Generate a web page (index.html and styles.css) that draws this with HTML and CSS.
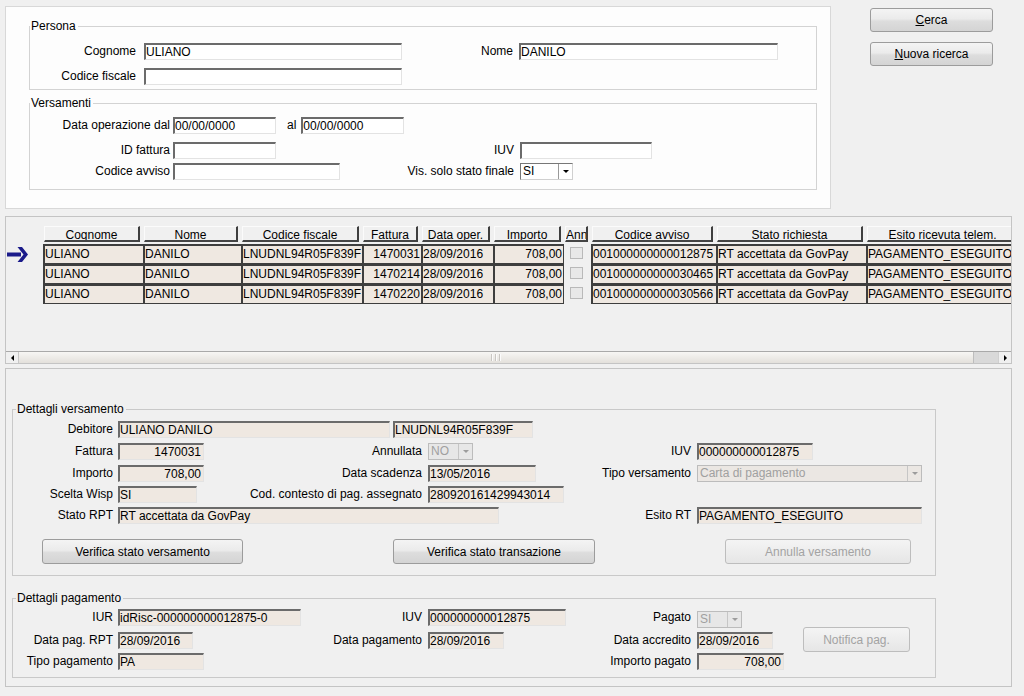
FILE: index.html
```html
<!DOCTYPE html>
<html lang="it">
<head>
<meta charset="utf-8">
<title>Ricerca versamenti</title>
<link rel="stylesheet" href="styles.css">
</head>
<body>
<main class="app">
  <div class="top">
    <section class="search">
      <fieldset class="grp persona">
        <legend>Persona</legend>
        <div class="form form-persona">
          <span class="lbl key">Cognome</span>
          <div class="cell"><div class="fld w258">ULIANO</div><span class="lbl">Nome</span></div>
          <div class="fld w259">DANILO</div>
          <span class="lbl key">Codice fiscale</span>
          <div class="cell"><div class="fld w258"></div></div>
        </div>
      </fieldset>
      <fieldset class="grp versamenti">
        <legend>Versamenti</legend>
        <div class="form form-vers">
          <span class="lbl key">Data operazione dal</span>
          <div class="cell"><div class="fld w103">00/00/0000</div><span class="lbl al">al</span><div class="fld w103">00/00/0000</div></div>
          <span class="lbl key">ID fattura</span>
          <div class="cell"><div class="fld w103"></div><span class="lbl">IUV</span></div>
          <div class="fld w132"></div>
          <span class="lbl key">Codice avviso</span>
          <div class="cell"><div class="fld w167"></div><span class="lbl">Vis. solo stato finale</span></div>
          <div class="sel w53"><span class="sel-v">SI</span><span class="sel-b"><i class="tri"></i></span></div>
        </div>
      </fieldset>
    </section>
    <div class="actions">
      <div class="btn"><span><u>C</u>erca</span></div>
      <div class="btn"><span><u>N</u>uova ricerca</span></div>
    </div>
  </div>

  <section class="list">
    <div class="list-body">
      <div class="lrow lhead">
        <span class="mark"></span>
        <span class="c c1">Cognome</span>
        <span class="c c2">Nome</span>
        <span class="c c3">Codice fiscale</span>
        <span class="c c4">Fattura</span>
        <span class="c c5">Data oper.</span>
        <span class="c c6">Importo</span>
        <span class="c c7">Ann</span>
        <span class="c c8">Codice avviso</span>
        <span class="c c9">Stato richiesta</span>
        <span class="c c10">Esito ricevuta telem.</span>
      </div>
      <div class="lrow ldata">
        <span class="mark"><svg width="21" height="16" viewBox="0 0 21 16"><path fill="#1b1b8a" d="M0 5.5h14v4H0z M10.5 0h4.5l6 7.5-6 7.5h-4.5l6-7.5z"/></svg></span>
        <span class="c c1">ULIANO</span>
        <span class="c c2">DANILO</span>
        <span class="c c3">LNUDNL94R05F839F</span>
        <span class="c c4 num">1470031</span>
        <span class="c c5">28/09/2016</span>
        <span class="c c6 num">708,00</span>
        <span class="c c7 cbx"><i class="cb"></i></span>
        <span class="c c8">001000000000012875</span>
        <span class="c c9">RT accettata da GovPay</span>
        <span class="c c10">PAGAMENTO_ESEGUITO</span>
      </div>
      <div class="lrow ldata">
        <span class="mark"></span>
        <span class="c c1">ULIANO</span>
        <span class="c c2">DANILO</span>
        <span class="c c3">LNUDNL94R05F839F</span>
        <span class="c c4 num">1470214</span>
        <span class="c c5">28/09/2016</span>
        <span class="c c6 num">708,00</span>
        <span class="c c7 cbx"><i class="cb"></i></span>
        <span class="c c8">001000000000030465</span>
        <span class="c c9">RT accettata da GovPay</span>
        <span class="c c10">PAGAMENTO_ESEGUITO</span>
      </div>
      <div class="lrow ldata">
        <span class="mark"></span>
        <span class="c c1">ULIANO</span>
        <span class="c c2">DANILO</span>
        <span class="c c3">LNUDNL94R05F839F</span>
        <span class="c c4 num">1470220</span>
        <span class="c c5">28/09/2016</span>
        <span class="c c6 num">708,00</span>
        <span class="c c7 cbx"><i class="cb"></i></span>
        <span class="c c8">001000000000030566</span>
        <span class="c c9">RT accettata da GovPay</span>
        <span class="c c10">PAGAMENTO_ESEGUITO</span>
      </div>
    </div>
    <div class="hscroll">
      <span class="sb-btn"><i class="tri-l"></i></span>
      <span class="sb-thumb"><i class="grip"></i></span>
      <span class="sb-track"></span>
      <span class="sb-btn right"><i class="tri-r"></i></span>
    </div>
  </section>

  <section class="detail">
    <fieldset class="grp dv">
      <legend>Dettagli versamento</legend>
      <div class="form form-dv">
        <span class="lbl key">Debitore</span>
        <div class="cell span2"><div class="fld ro w272">ULIANO DANILO</div><div class="fld ro w140 ml3">LNUDNL94R05F839F</div></div>

        <span class="lbl key">Fattura</span>
        <div class="cell"><div class="fld ro num w86">1470031</div><span class="lbl">Annullata</span></div>
        <div class="cell"><div class="sel off w45"><span class="sel-v">NO</span><span class="sel-b"><i class="tri"></i></span></div><span class="lbl">IUV</span></div>
        <div class="fld ro w116">000000000012875</div>

        <span class="lbl key">Importo</span>
        <div class="cell"><div class="fld ro num w86">708,00</div><span class="lbl">Data scadenza</span></div>
        <div class="cell"><div class="fld ro w108">13/05/2016</div><span class="lbl">Tipo versamento</span></div>
        <div class="sel off tipo w225 span2"><span class="sel-v">Carta di pagamento</span><span class="sel-b"><i class="tri"></i></span></div>

        <span class="lbl key">Scelta Wisp</span>
        <div class="cell"><div class="fld ro w79">SI</div><span class="lbl">Cod. contesto di pag. assegnato</span></div>
        <div class="fld ro w136">280920161429943014</div>

        <span class="lbl key">Stato RPT</span>
        <div class="cell span2"><div class="fld ro w381">RT accettata da GovPay</div><span class="lbl">Esito RT</span></div>
        <div class="fld ro w225 span2">PAGAMENTO_ESEGUITO</div>
      </div>
      <div class="btnrow">
        <div class="btn b1">Verifica stato versamento</div>
        <div class="btn b2">Verifica stato transazione</div>
        <div class="btn off b3">Annulla versamento</div>
      </div>
    </fieldset>

    <fieldset class="grp dp">
      <legend>Dettagli pagamento</legend>
      <div class="form form-dp">
        <div class="btn off notifica">Notifica pag.</div>

        <span class="lbl key">IUR</span>
        <div class="cell"><div class="fld ro w183">idRisc-000000000012875-0</div><span class="lbl">IUV</span></div>
        <div class="cell"><div class="fld ro w138">000000000012875</div><span class="lbl">Pagato</span></div>
        <div class="sel off w45 pagato"><span class="sel-v">SI</span><span class="sel-b"><i class="tri"></i></span></div>

        <span class="lbl key">Data pag. RPT</span>
        <div class="cell"><div class="fld ro w75">28/09/2016</div><span class="lbl">Data pagamento</span></div>
        <div class="cell"><div class="fld ro w76">28/09/2016</div><span class="lbl">Data accredito</span></div>
        <div class="fld ro w76">28/09/2016</div>

        <span class="lbl key">Tipo pagamento</span>
        <div class="cell"><div class="fld ro w86">PA</div></div>
        <div class="cell"><span class="lbl">Importo pagato</span></div>
        <div class="fld ro num w87">708,00</div>
      </div>
    </fieldset>
  </section>
</main>
</body>
</html>
```

FILE: styles.css
```css
* { box-sizing: border-box; }
html, body { margin: 0; padding: 0; }
body {
  width: 1024px;
  height: 696px;
  overflow: hidden;
  background: #f0f0f0;
  font-family: "Liberation Sans", Arial, sans-serif;
  font-size: 12px;
  line-height: 14px;
  color: #000;
}

/* ---------- top search area ---------- */
.top { display: flex; align-items: flex-start; padding: 6px 0 0 5px; }
.search {
  flex: none;
  width: 826px;
  height: 203px;
  background: #fdfdfd;
  border: 1px solid #d8d8d8;
  padding: 12px 0 0 23px;
}
.actions { display: flex; flex-direction: column; gap: 10px; margin: 2px 0 0 39px; }
.actions .btn { width: 123px; height: 24px; }

.btn {
  flex: none;
  display: flex;
  align-items: center;
  justify-content: center;
  white-space: nowrap;
  border: 1px solid #9c9c9c;
  border-radius: 3px;
  background: linear-gradient(#f4f4f4, #ebebeb 45%, #dddddd 55%, #d4d4d4);
}
.btn.off {
  color: #a3a3a3;
  border-color: #bdbdbd;
  background: linear-gradient(#f4f4f4, #e6e6e6);
}

/* ---------- group boxes ---------- */
.grp { margin: 0; padding: 0; border: 1px solid #d3d3d3; min-width: 0; }
.grp > legend { padding: 0 2px 0 1px; line-height: 14px; }
.persona, .versamenti { width: 788px; }
.persona { padding: 10px 0 4px; }
.versamenti { margin-top: 6px; padding: 7px 0 9px; }

.form { display: grid; align-items: start; }
.form-persona { grid-template-columns: 114px 375px 1fr; grid-template-rows: 25px 17px; }
.form-vers { grid-template-columns: 143px 347px 1fr; grid-template-rows: 25px 21px 17px; }

.lbl { line-height: 17px; white-space: nowrap; }
.key { grid-column: 1; text-align: right; padding-right: 5px; }
.persona .key { padding-right: 8px; }
.versamenti .key { padding-right: 3px; }
.cell { display: flex; align-items: center; height: 17px; min-width: 0; }
.cell .lbl { margin-left: auto; padding-right: 6px; }
.cell .al { margin: 0 5px 0 11px; padding: 0; }
.span2 { grid-column: span 2; }
.ml3 { margin-left: 3px; }

/* ---------- fields ---------- */
.fld {
  flex: none;
  height: 17px;
  padding: 0 2px 0 0;
  line-height: 14px;
  background: #fff;
  border-style: solid;
  border-width: 2px 1px 1px 2px;
  border-color: #6b6b6b #e3e3e3 #e3e3e3 #6b6b6b;
  white-space: nowrap;
  overflow: hidden;
}
.fld.ro { background: #efe8e1; }
.fld.num { text-align: right; }

.sel {
  flex: none;
  display: flex;
  height: 17px;
  background: #fff;
  border: 1px solid;
  border-color: #777 #d0d0d0 #d0d0d0 #777;
}
.sel-v { flex: 1; padding-left: 2px; line-height: 15px; overflow: hidden; white-space: nowrap; }
.sel-b {
  flex: none;
  width: 14px;
  border-left: 1px solid #9a9a9a;
  display: flex;
  align-items: center;
  justify-content: center;
}
.tri {
  width: 0; height: 0;
  border-left: 3px solid transparent;
  border-right: 3px solid transparent;
  border-top: 3px solid #000;
}
.sel.off { background: #e7e7e7; border-color: #bcbcbc; color: #a0a0a0; }
.sel.off .sel-b { border-left-color: #c6c6c6; }
.sel.off .tri { border-top-color: #9c9c9c; }
.sel.tipo { background: #ebe7e3; }

.w45 { width: 45px; } .w53 { width: 53px; } .w75 { width: 75px; } .w76 { width: 76px; }
.w79 { width: 79px; } .w86 { width: 86px; } .w87 { width: 87px; } .w103 { width: 103px; }
.w108 { width: 108px; } .w116 { width: 116px; } .w132 { width: 132px; } .w136 { width: 136px; }
.w138 { width: 138px; } .w140 { width: 140px; } .w167 { width: 167px; } .w183 { width: 183px; }
.w225 { width: 225px; } .w258 { width: 258px; } .w259 { width: 259px; } .w272 { width: 272px; }
.w381 { width: 381px; }

/* ---------- results list ---------- */
.list {
  margin: 7px 0 0 5px;
  width: 1007px;
  height: 148px;
  border: 1px solid #c4c4c4;
  display: flex;
  flex-direction: column;
}
.list-body { flex: 1; overflow: hidden; padding-top: 9px; }
.lrow { display: flex; width: max-content; }
.lhead { height: 16px; margin-bottom: 2px; }
.mark { flex: none; width: 37px; display: flex; align-items: flex-start; }
.mark svg { margin: 3px 0 0 1px; }

.c { flex: none; overflow: hidden; white-space: nowrap; }
.c1 { --w: 100px; } .c2 { --w: 98px; } .c3 { --w: 121px; } .c4 { --w: 59px; }
.c5 { --w: 72px; } .c6 { --w: 71px; } .c7 { --w: 27px; } .c8 { --w: 125px; }
.c9 { --w: 150px; } .c10 { --w: 156px; }

.lhead .c {
  width: calc(var(--w) - 4px);
  margin: 0 3px 0 1px;
  height: 16px;
  padding-top: 1px;
  line-height: 14px;
  text-align: center;
  border-style: solid;
  border-width: 1px 2px 2px 1px;
  border-color: #fbfbfb #3e3e3e #444 #fbfbfb;
}
.ldata .c {
  width: var(--w);
  height: 20px;
  line-height: 17px;
  background: #efe8e1;
  border-style: solid;
  border-width: 2px 0 1px 2px;
  border-color: #3e3e3e;
}
.ldata .c6 { border-right-width: 1px; }
.ldata .num { text-align: right; padding-right: 1px; }
.ldata .cbx { background: none; border: none; padding: 3px 0 0 6px; }
.cb { display: block; width: 13px; height: 12px; background: #e8e8e8; border: 1px solid #b9b9b9; }

.hscroll { flex: none; height: 12px; border-top: 1px solid #a9a9a9; display: flex; }
.sb-btn {
  flex: none;
  width: 12px;
  display: flex;
  align-items: center;
  justify-content: center;
  background: #f0f0f0;
}
.sb-btn.right { width: 13px; border-left: 1px solid #d0d0d0; }
.sb-thumb {
  flex: none;
  width: 956px;
  background: linear-gradient(#f7f6f4, #e3e0db);
  border-left: 1px solid #c8c8c8;
  border-right: 1px solid #bdbdbd;
  display: flex;
  align-items: center;
  justify-content: center;
}
.sb-track { flex: 1; background: #d9d9d9; }
.tri-l { border-top: 3px solid transparent; border-bottom: 3px solid transparent; border-right: 3px solid #000; }
.tri-r { border-top: 3px solid transparent; border-bottom: 3px solid transparent; border-left: 3px solid #000; }
.grip {
  width: 11px;
  height: 7px;
  background: repeating-linear-gradient(90deg, #c9c6c2 0 1px, #fbfbfb 1px 2px, transparent 2px 4px);
}

/* ---------- detail panel ---------- */
.detail {
  margin: 4px 0 0 5px;
  width: 1007px;
  height: 319px;
  border: 1px solid #c4c4c4;
  padding: 33px 0 0 6px;
}
.dv, .dp { width: 924px; border-color: #c9c9c9; }
.dv > legend, .dp > legend { margin-left: 3px; }
.dv { padding: 5px 0 11px; }
.dp { margin-top: 15px; padding: 4px 0 7px; }
.form-dv { grid-template-columns: 105px 310px 269px 106px 1fr; grid-template-rows: 22px 22px 21px 21px 17px; }
.form-dp { grid-template-columns: 105px 310px 269px 106px 1fr; grid-template-rows: 23px 21px 17px; }

.btnrow { display: flex; margin: 15px 0 0 29px; }
.btnrow .btn { height: 25px; }
.b1 { width: 201px; }
.b2 { width: 202px; margin-left: 150px; }
.b3 { width: 186px; margin-left: 130px; }
.notifica { grid-column: 5; grid-row: 2; width: 107px; height: 25px; margin-top: -5px; }
.pagato { margin-top: 2px; }
```
